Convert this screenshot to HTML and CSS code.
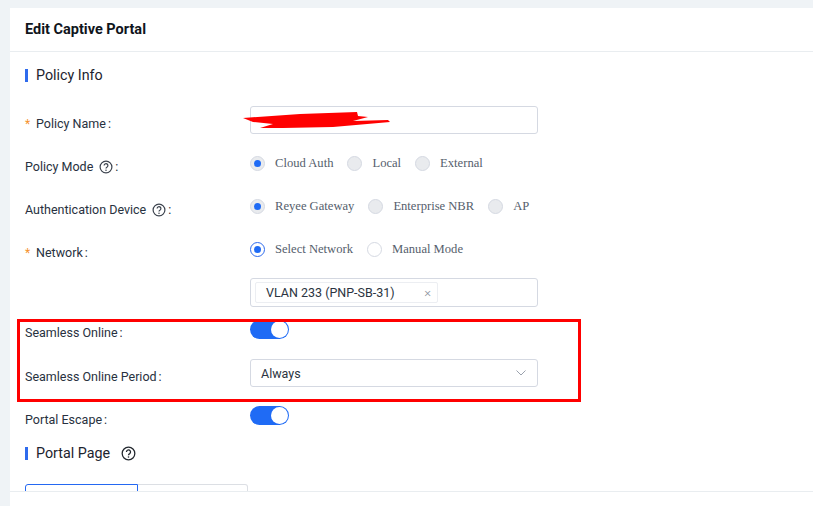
FILE: index.html
```html
<!DOCTYPE html>
<html lang="en">
<head>
<meta charset="utf-8">
<title>Edit Captive Portal</title>
<link rel="stylesheet" href="styles.css">
</head>
<body>
<svg width="0" height="0" class="defs"><symbol id="q" viewBox="0 0 14 14"><circle cx="7" cy="7" r="5.9" fill="none" stroke="currentColor" stroke-width="1.2"/><path d="M5.1 5.6a1.9 1.9 0 1 1 3 1.5c-.7.45-1.1.8-1.1 1.5" fill="none" stroke="currentColor" stroke-width="1.2"/><circle cx="7" cy="10.2" r=".75" fill="currentColor"/></symbol></svg>
<main class="card">
  <header class="card-head">Edit Captive Portal</header>
  <div class="card-body">
    <h2 class="section first">Policy Info</h2>
    <div class="row"><div class="label"><span class="star">*</span>Policy Name<span class="colon">:</span></div>
      <div class="control"><div class="input"></div></div></div>
    <div class="row"><div class="label">Policy Mode<svg class="help"><use href="#q"/></svg><span class="colon">:</span></div>
      <div class="control radios">
        <span class="radio"><i class="dot checked-off"></i>Cloud Auth</span>
        <span class="radio"><i class="dot off"></i>Local</span>
        <span class="radio"><i class="dot off"></i>External</span>
      </div></div>
    <div class="row"><div class="label">Authentication Device<svg class="help"><use href="#q"/></svg><span class="colon">:</span></div>
      <div class="control radios">
        <span class="radio"><i class="dot checked-off"></i>Reyee Gateway</span>
        <span class="radio"><i class="dot off"></i>Enterprise NBR</span>
        <span class="radio"><i class="dot off"></i>AP</span>
      </div></div>
    <div class="row"><div class="label"><span class="star">*</span>Network<span class="colon">:</span></div>
      <div class="control radios">
        <span class="radio"><i class="dot checked"></i>Select Network</span>
        <span class="radio"><i class="dot empty"></i>Manual Mode</span>
      </div></div>
    <div class="row tags-row"><div class="label"></div>
      <div class="control"><div class="input tags"><span class="tag">VLAN 233 (PNP-SB-31)<span class="tag-x">×</span></span></div></div></div>
    <div class="row seamless"><div class="label">Seamless Online<span class="colon">:</span></div>
      <div class="control toggle-wrap"><span class="toggle"></span></div></div>
    <div class="row"><div class="label">Seamless Online Period<span class="colon">:</span></div>
      <div class="control"><div class="input select">Always<svg class="chev" width="10" height="6" viewBox="0 0 10 6"><path d="M.5.5 5 5 9.5.5" fill="none" stroke="#9aa1ad" stroke-width="1"/></svg></div></div></div>
    <div class="row escape"><div class="label">Portal Escape<span class="colon">:</span></div>
      <div class="control toggle-wrap tight"><span class="toggle"></span></div></div>
    <h2 class="section second">Portal Page<svg class="help big"><use href="#q"/></svg></h2>
    <div class="tabs"><div class="tab active"></div><div class="tab"></div></div>
  </div>
  <footer class="card-foot"></footer>
</main>
<svg class="scribble" width="150" height="20" viewBox="0 0 150 20"><path d="M0 6 57 2 114 0 115 4 125 5 110 9 145 8 147 10 90 15 40 16 17 16 30 12 10 10Z" fill="#f00"/></svg>
<div class="highlight"></div>
</body>
</html>
```
FILE: styles.css
```css
* { box-sizing: border-box; }
html, body { margin: 0; height: 100%; overflow: hidden; }
body { background: #eff3f6; padding: 8px 0 0 10px; font-family: Roboto, "Liberation Sans", sans-serif; color: #1f2733; position: relative; }
.defs { position: absolute; }
.card { background: #fff; height: 498px; display: flex; flex-direction: column; overflow: hidden; }
.card-head { height: 44px; flex: none; padding: 0 15px 1px; display: flex; align-items: center; font-size: 14.5px; font-weight: 700; color: #10151c; border-bottom: 1px solid #e9edf0; }
.card-body { flex: 1; overflow: hidden; padding: 0 15px; min-height: 0; }
.card-foot { flex: none; height: 15px; border-top: 1px solid #e9edf0; background: #fff; }
.section { margin: 0; height: 13px; line-height: 13px; font-size: 14.3px; font-weight: 400; color: #1c232e; border-left: 3px solid #2f6bed; padding-left: 8px; display: flex; align-items: center; }
.section.first { margin-top: 17px; margin-bottom: 24px; }
.section.second { margin-top: 1px; margin-bottom: 24px; }
.row { display: flex; height: 43px; }
.row.tags-row { height: 37px; }
.row.seamless { height: 44px; }
.row.escape { height: 44px; }
.label { width: 225px; flex: none; padding-top: 9px; height: 27px; line-height: 18px; font-size: 12.5px; color: #283140; display: flex; align-items: center; }
.star { color: #f5922f; width: 11px; flex: none; font-size: 12px; }
.colon { margin-left: 2px; }
.help { width: 14px; height: 14px; margin-left: 6px; color: #3c434e; }
.help.big { width: 15px; height: 15px; margin-left: 11px; color: #22272e; }
.control { flex: none; width: 288px; }
.input { height: 28px; border: 1px solid #d5d9e2; border-radius: 3px; background: #fff; }
.tags { height: 29px; padding: 3px 4px; }
.tag { display: inline-flex; align-items: center; height: 21px; width: 183px; padding: 0 6px 0 10px; border: 1px solid #eceef2; border-radius: 2px; font-size: 12.5px; color: #2b3441; justify-content: space-between; }
.tag-x { color: #8a909b; font-size: 13px; font-weight: 300; }
.select { display: flex; align-items: center; justify-content: space-between; padding: 0 11px 0 10px; font-size: 12.5px; color: #2b3441; }
.radios { display: flex; padding-top: 5px; gap: 14px; font-family: "Liberation Serif", serif; font-size: 12.6px; color: #555e6c; height: 23px; }
.radio { display: inline-flex; align-items: center; height: 18px; line-height: 14px; }
.dot { display: inline-block; width: 15px; height: 15px; border-radius: 50%; margin-right: 10px; flex: none; border: 1px solid #d5d9e2; background: #e9ebee; position: relative; }
.dot.checked-off::after, .dot.checked::after { content: ""; position: absolute; left: 3px; top: 3px; width: 7px; height: 7px; border-radius: 50%; background: #1f6bf5; }
.dot.checked { border-color: #2f6bed; background: #fff; }
.dot.empty { background: #fff; }
.toggle-wrap { padding-top: 5px; }
.toggle-wrap.tight { padding-top: 4px; }
.toggle { display: block; width: 39px; height: 19px; border-radius: 10px; background: #1f6bf5; position: relative; }
.toggle::after { content: ""; position: absolute; right: 1px; top: 1px; width: 17px; height: 17px; border-radius: 50%; background: #fff; }
.tabs { display: flex; height: 40px; }
.tab { width: 110px; height: 40px; border: 1px solid #dcdfe4; border-left: 0; border-radius: 0 3px 0 0; }
.tab.active { width: 113px; border: 1px solid #2468f2; border-radius: 3px 0 0 0; }
.scribble { position: absolute; left: 243px; top: 112px; }
.highlight { position: absolute; left: 17px; top: 319px; width: 564px; height: 83px; border: 3px solid #f00; }
```
